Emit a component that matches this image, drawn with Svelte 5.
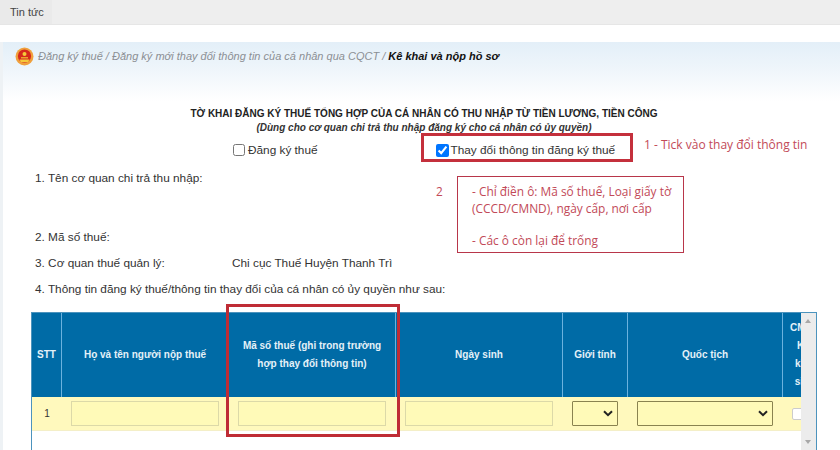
<script>
    const columns = [
        { key: 'stt', label: 'STT' },
        { key: 'name', label: 'Họ và tên người nộp thuế' },
        { key: 'tax', label: 'Mã số thuế (ghi trong trường hợp thay đổi thông tin)' },
        { key: 'dob', label: 'Ngày sinh' },
        { key: 'sex', label: 'Giới tính' },
        { key: 'nation', label: 'Quốc tịch' },
        { key: 'cm', label: 'CMND\nKhi\nkhai\nsinh' }
    ];
</script>

<div class="page">
    <nav class="tabs"><span class="tab">Tin tức</span></nav>

    <div class="main">
        <div class="crumbs">
            <svg class="emblem" width="19" height="19" viewBox="0 0 19 19">
                <circle cx="9.5" cy="9.5" r="9" fill="#f0a03c" />
                <circle cx="9.5" cy="9" r="6.6" fill="#d5281c" />
                <circle cx="9.5" cy="7" r="2" fill="#f4c93a" />
                <path d="M4.5 12.5h10l-1.5 2.5h-7z" fill="#f4c93a" />
                <path d="M6 10h7v1.5H6z" fill="#e9a32c" />
            </svg>
            <span><span class="trail">Đăng ký thuế / Đăng ký mới thay đổi thông tin của cá nhân qua CQCT /&nbsp;</span><b>Kê khai và nộp hồ sơ</b></span>
        </div>

        <h1>TỜ KHAI ĐĂNG KÝ THUẾ TỔNG HỢP CỦA CÁ NHÂN CÓ THU NHẬP TỪ TIỀN LƯƠNG, TIỀN CÔNG</h1>
        <p class="sub">(Dùng cho cơ quan chi trả thu nhập đăng ký cho cá nhân có ủy quyền)</p>

        <div class="choices">
            <label class="first"><input type="checkbox" />Đăng ký thuế</label>
            <label class="second"><input type="checkbox" checked />Thay đổi thông tin đăng ký thuế</label>
            <div class="mark-tick"></div>
            <span class="note-one">1 - Tick vào thay đổi thông tin</span>
        </div>

        <div class="fields">
            <div class="field tall"><span>1. Tên cơ quan chi trả thu nhập:</span></div>
            <div class="field"><span>2. Mã số thuế:</span></div>
            <div class="field"><span>3. Cơ quan thuế quản lý:</span><span>Chi cục Thuế Huyện Thanh Trì</span></div>
            <div class="field"><span class="wide">4. Thông tin đăng ký thuế/thông tin thay đổi của cá nhân có ủy quyền như sau:</span></div>

            <span class="note-two">2</span>
            <div class="note-box">
                <p>- Chỉ điền ô: Mã số thuế, Loại giấy tờ (CCCD/CMND), ngày cấp, nơi cấp</p>
                <p>- Các ô còn lại để trống</p>
            </div>
        </div>

        <div class="table-wrap">
            <div class="grid">
                {#each columns as col}
                    <div class="head {col.key}">{col.label}</div>
                {/each}
                <div class="cell num">1</div>
                <div class="cell"><input type="text" /></div>
                <div class="cell"><input type="text" /></div>
                <div class="cell"><input type="text" /></div>
                <div class="cell">
                    <div class="fake-select">
                        <svg width="10" height="7" viewBox="0 0 10 7"><path d="M1 1.2l4 4 4-4" fill="none" stroke="#222" stroke-width="2" /></svg>
                    </div>
                </div>
                <div class="cell">
                    <div class="fake-select">
                        <svg width="10" height="7" viewBox="0 0 10 7"><path d="M1 1.2l4 4 4-4" fill="none" stroke="#222" stroke-width="2" /></svg>
                    </div>
                </div>
                <div class="cell last"><span class="small-box"></span></div>
            </div>
            <div class="scrollbar">
                <span class="arrow up"></span>
                <span class="arrow down"></span>
            </div>
            <div class="mark-column"></div>
        </div>
    </div>
</div>

<style>
    :global(body) {
        margin: 0;
        background: #fff;
    }

    .page {
        width: 840px;
        height: 450px;
        overflow: hidden;
        font-family: "Liberation Sans", Arial, sans-serif;
        font-size: 11.8px;
        color: #333;
    }

    .tabs {
        height: 24px;
        background: #eeeeee;
        border-bottom: 1px solid #e6e6e6;
    }

    .tab {
        display: inline-block;
        width: 52px;
        height: 24px;
        line-height: 24px;
        padding-left: 10px;
        box-sizing: border-box;
        background: #eaeaea;
        font-size: 11px;
        color: #444;
    }

    .main {
        margin-top: 17px;
        margin-left: 3px;
        height: 408px;
        background: linear-gradient(#e3eff8 0, #f0f6fb 30px, #fff 60px);
        box-shadow: -3px 0 0 #eef2f5;
        position: relative;
    }

    .crumbs {
        display: flex;
        align-items: center;
        height: 28px;
        padding-left: 12px;
        font-size: 11px;
        font-style: italic;
        white-space: nowrap;
    }

    .emblem {
        margin-right: 4px;
    }

    .trail {
        color: #8b8f94;
    }

    .crumbs b {
        color: #111;
    }

    h1 {
        margin: 37px 0 0;
        width: 842px;
        text-align: center;
        font-size: 10px;
        line-height: 14px;
        color: #222;
    }

    .sub {
        margin: 0;
        width: 842px;
        text-align: center;
        font-size: 10px;
        font-weight: bold;
        font-style: italic;
        line-height: 13px;
        color: #333;
    }

    .choices {
        display: flex;
        align-items: center;
        position: relative;
        height: 28px;
        margin-top: 2px;
    }

    .choices label {
        display: flex;
        align-items: center;
        color: #333;
    }

    .choices input {
        width: 12px;
        height: 12px;
        margin: 0 3px 0 0;
    }

    .first {
        margin-left: 230px;
    }

    .second {
        margin-left: 118px;
    }

    .choices .second input {
        width: 13px;
        height: 13px;
        margin-right: 2px;
    }

    .mark-tick {
        position: absolute;
        left: 418px;
        top: -3px;
        width: 212px;
        height: 29px;
        border: 3px solid #c4303c;
        box-sizing: border-box;
    }

    .note-one {
        position: absolute;
        left: 641px;
        top: 0;
        font-family: "Open Sans", sans-serif;
        font-size: 12px;
        color: #c24a58;
        white-space: nowrap;
    }

    .fields {
        position: relative;
        padding-left: 32px;
        margin-top: 5px;
    }

    .field {
        display: flex;
        height: 26px;
        line-height: 18px;
        color: #333;
    }

    .field.tall {
        height: 59px;
    }

    .field span:first-child {
        width: 197px;
        flex: none;
    }

    .field span.wide {
        width: auto;
    }

    .note-two {
        position: absolute;
        left: 433px;
        top: 14px;
        font-family: "Open Sans", sans-serif;
        color: #c24a58;
    }

    .note-box {
        position: absolute;
        left: 454px;
        top: 7px;
        width: 227px;
        height: 77px;
        box-sizing: border-box;
        border: 1px solid #b8364a;
        padding: 6px 8px 0 14px;
        font-family: "Open Sans", sans-serif;
        font-size: 11.9px;
        line-height: 16.5px;
        color: #c24a58;
        background: #fff;
    }

    .note-box p {
        margin: 0 0 16px;
    }

    .table-wrap {
        position: relative;
        display: flex;
        width: 786px;
        height: 139px;
        margin-left: 28px;
        margin-top: 6px;
        border: 1px solid #4c93bd;
        border-bottom: 0;
        box-sizing: border-box;
    }

    .grid {
        flex: none;
        width: 769px;
        height: 118px;
        overflow: hidden;
        display: grid;
        grid-template-columns: 30px 167px 167px 167px 65px 155px 44px;
        grid-template-rows: 84px 34px;
    }

    .head {
        display: flex;
        align-items: center;
        justify-content: center;
        text-align: center;
        background: #006ba6;
        border-right: 1px solid #6cb2de;
        box-sizing: border-box;
        padding: 0 10px;
        font-size: 10px;
        font-weight: bold;
        line-height: 18px;
        color: #e4f1f8;
    }

    .head.stt {
        padding: 0;
    }

    .head.cm {
        border-right: 0;
        padding: 0;
        white-space: pre-line;
    }

    .cell {
        display: flex;
        align-items: center;
        justify-content: center;
        background: #fff9bd;
        border-bottom: 1px solid #f4efc8;
    }

    .cell.num {
        color: #333;
        font-size: 10px;
    }

    .cell input {
        width: 148px;
        height: 25px;
        margin: 0 2px 0 0;
        box-sizing: border-box;
        background: #fffab8;
        border: 1px solid #dcd9a8;
        padding: 0;
    }

    .fake-select {
        flex: 1;
        margin: 0 10px 0 9px;
        height: 25px;
        box-sizing: border-box;
        border: 1px solid #8a8350;
        border-radius: 1px;
        background: #fffab8;
        display: flex;
        align-items: center;
        justify-content: flex-end;
        padding-right: 4px;
    }

    .cell.last {
        justify-content: flex-start;
        padding-left: 9px;
    }

    .small-box {
        width: 12px;
        height: 10px;
        background: #fff;
        border: 1px solid #ccc;
        border-radius: 2px;
    }

    .scrollbar {
        flex: none;
        width: 15px;
        background: #ececec;
        margin-left: auto;
        position: relative;
    }

    .arrow {
        position: absolute;
        left: 4px;
        border-left: 3.5px solid transparent;
        border-right: 3.5px solid transparent;
    }

    .arrow.up {
        top: 6px;
        border-bottom: 4px solid #a8a8a8;
    }

    .arrow.down {
        bottom: 7px;
        border-top: 4px solid #a8a8a8;
    }

    .mark-column {
        position: absolute;
        left: 194px;
        top: -9px;
        width: 174px;
        height: 133px;
        box-sizing: border-box;
        border: 3px solid #bf2c35;
    }
</style>
